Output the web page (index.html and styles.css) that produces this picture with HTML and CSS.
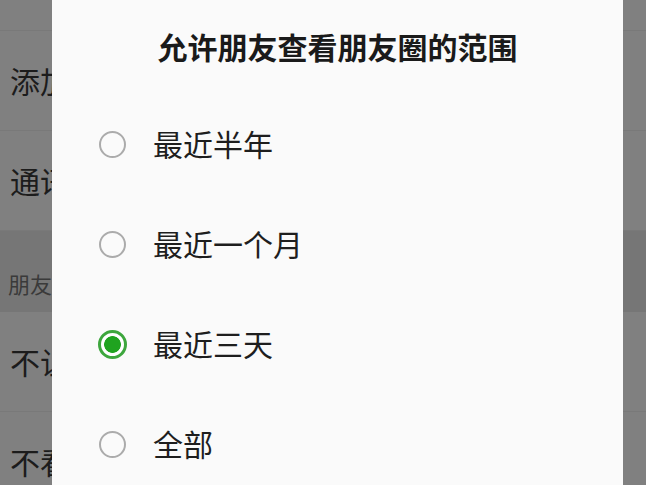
FILE: index.html
```html
<!DOCTYPE html>
<html lang="zh-CN">
<head>
    <meta charset="UTF-8">
    <meta name="viewport" content="width=device-width, initial-scale=1.0">
    <title>朋友圈权限</title>
    <link rel="stylesheet" href="styles.css">
</head>
<body>

<div class="page">
    <div class="row row-top"></div>
    <div class="row"><span>添加我的方式</span></div>
    <div class="row"><span>通讯录黑名单</span></div>
    <div class="section-title"><span>朋友圈</span></div>
    <div class="row"><span>不让他（她）看</span></div>
    <div class="row"><span>不看他（她）</span></div>
</div>

<div class="dialog">
    <h2 class="dialog-title">允许朋友查看朋友圈的范围</h2>
    <div class="option">
        <span class="radio"></span>
        <span class="label">最近半年</span>
    </div>
    <div class="option">
        <span class="radio"></span>
        <span class="label">最近一个月</span>
    </div>
    <div class="option">
        <span class="radio checked"></span>
        <span class="label">最近三天</span>
    </div>
    <div class="option">
        <span class="radio"></span>
        <span class="label">全部</span>
    </div>
</div>

</body>
</html>
```

FILE: styles.css
```css
body {
    font-family: "Noto Sans CJK SC", "Noto Sans", sans-serif;
    margin: 0;
    padding: 0;
    width: 646px;
    height: 485px;
    overflow: hidden;
    position: relative;
    background-color: #808080;
}
.page {
    display: flex;
    flex-direction: column;
}
.row {
    height: 100px;
    flex-shrink: 0;
    display: flex;
    align-items: center;
    padding-left: 10px;
    border-bottom: 1px solid #797979;
    box-sizing: border-box;
}
/* only the part left of the dialog shows */
.row span {
    display: block;
    width: 42px;
    overflow: hidden;
    font-size: 30px;
    color: #1c1c1c;
    white-space: nowrap;
    margin-top: -2px;
}
.row-top {
    height: 31px;
}
.section-title {
    height: 81px;
    flex-shrink: 0;
    background-color: #767676;
    display: flex;
    align-items: flex-end;
    padding: 0 0 13px 8px;
    box-sizing: border-box;
}
.section-title span {
    display: block;
    width: 44px;
    overflow: hidden;
    font-size: 22px;
    color: #3a3a3a;
    white-space: nowrap;
}
.dialog {
    position: absolute;
    top: 0;
    left: 52px;
    width: 571px;
    height: 485px;
    background-color: #fafafa;
}
.dialog-title {
    margin: 0;
    height: 95px;
    padding-top: 31px;
    box-sizing: border-box;
    text-align: center;
    font-size: 30px;
    font-weight: bold;
    color: #1a1a1a;
    line-height: 1;
}
.option {
    height: 100px;
    display: flex;
    align-items: center;
    padding-left: 47px;
}
.radio {
    width: 27px;
    height: 27px;
    border: 2px solid #ababab;
    border-radius: 50%;
    box-sizing: border-box;
    margin-right: 27px;
    margin-top: -1px;
    flex-shrink: 0;
}
.radio.checked {
    width: 29px;
    height: 29px;
    border: 3px solid #3da63d;
    margin-left: -1px;
    margin-right: 26px;
    background: radial-gradient(circle, #1fa31f 0, #1fa31f 8px, #ffffff 8.7px);
}
.label {
    font-size: 30px;
    color: #1e1e1e;
    line-height: 1;
    margin-bottom: 5px;
}
```
